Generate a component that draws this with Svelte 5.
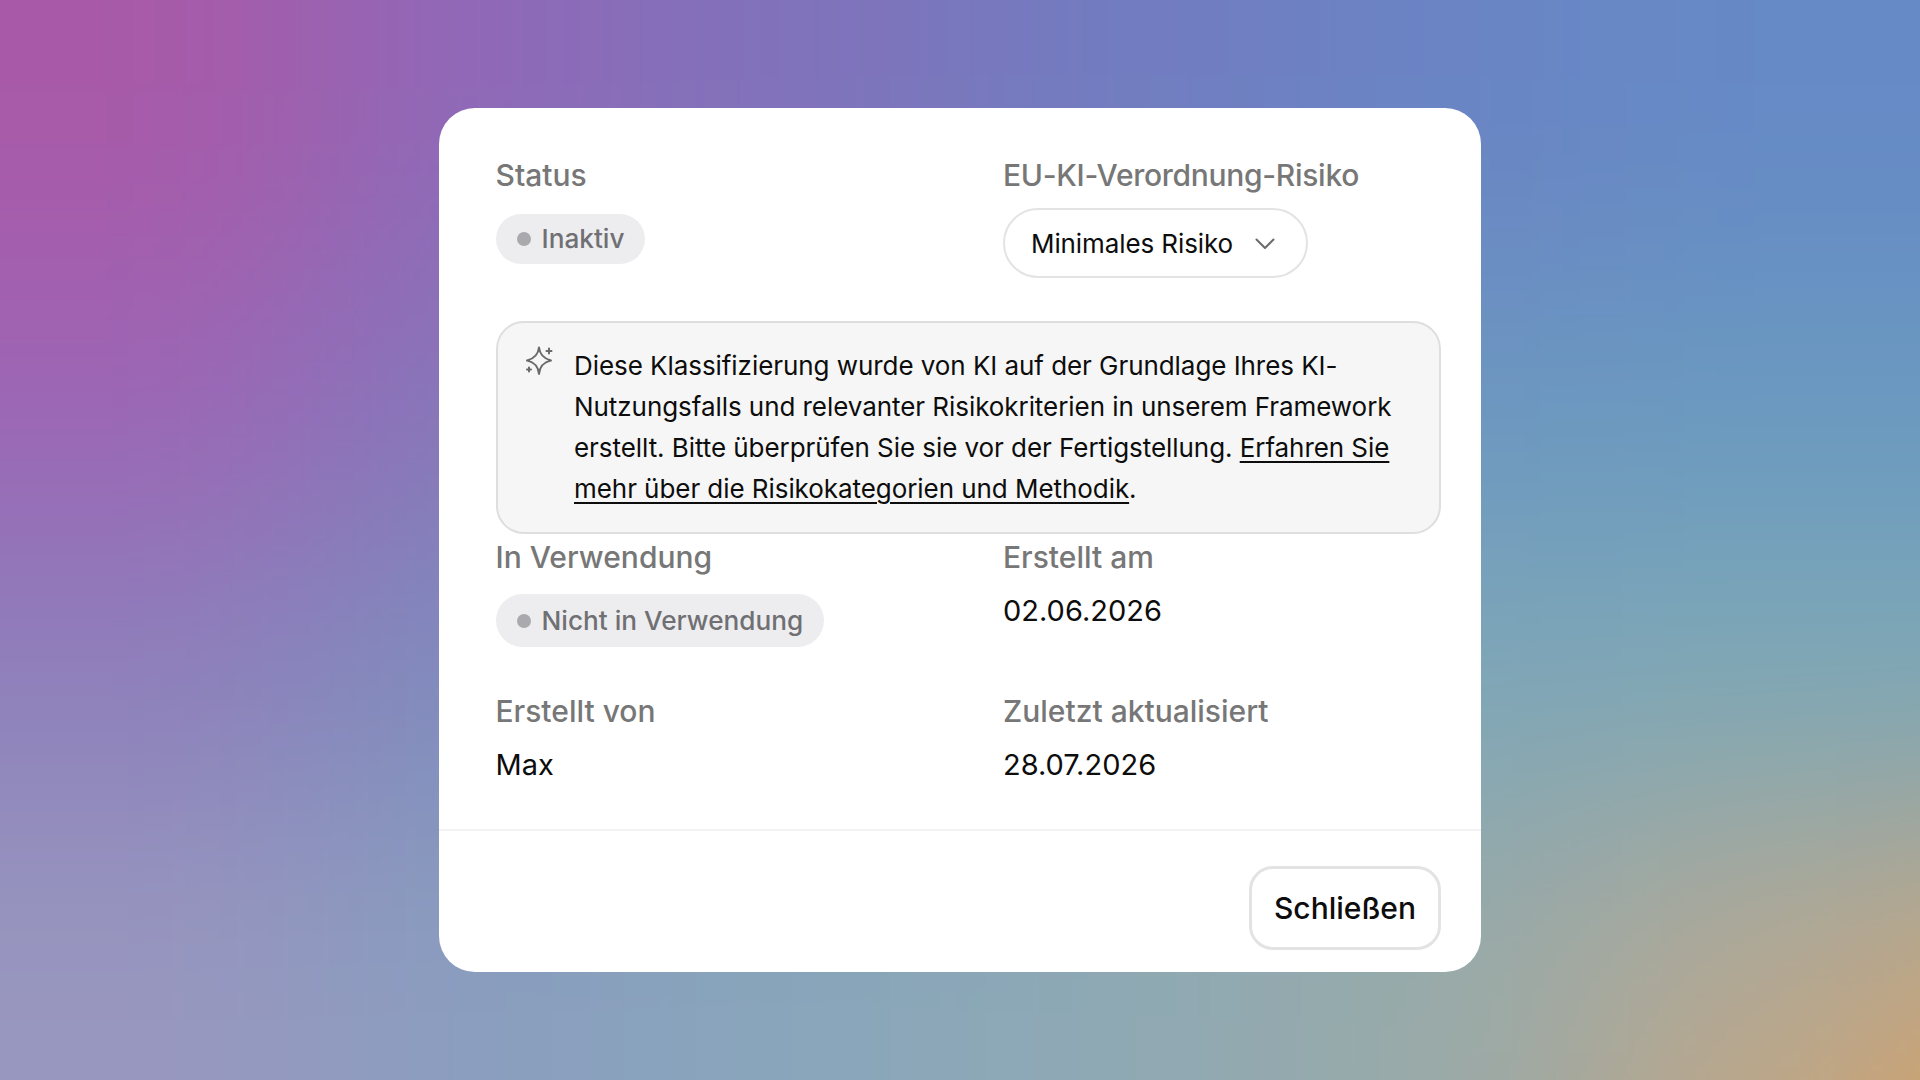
<script lang="ts">
  const rows = [
    { label: 'Erstellt von', value: 'Max' },
    { label: 'Zuletzt aktualisiert', value: '28.07.2026' }
  ]

  // backdrop colours, sampled on a coarse grid and blurred together
  const palette = [
    ['#a85aa8', '#8f69b8', '#8072bb', '#727cc0', '#6a84c4', '#668ac6'],
    ['#9c66b6', '#8677ba', '#7c84bc', '#7390bf', '#6c97c0', '#6a99c0'],
    ['#8d80bb', '#7f8cbd', '#7b98bd', '#7ba2bb', '#7ea7b8', '#7ea8b6'],
    ['#9897bf', '#8a9ebf', '#89a6bb', '#8fa9b4', '#99aaa9', '#b2a896']
  ]

  // repeat the outer cells so the blur has no fade at the window edge
  const padded = [palette[0], ...palette, palette[3]].map((r) => [r[0], ...r, r[5]])
  padded[5][7] = '#e89a48'
  padded[5][6] = '#c4a680'
  padded[4][7] = '#c4a680'
  const mesh = padded.flat()
</script>

<div class="page">
  <div class="mesh">
    {#each mesh as colour}
      <i style="background: {colour}"></i>
    {/each}
  </div>

  <div class="dialog">
    <div class="content">
      <div class="grid top">
        <div class="field">
          <span class="label">Status</span>
          <span class="pill first"><i class="dot"></i>Inaktiv</span>
        </div>
        <div class="field">
          <span class="label tight">EU-KI-Verordnung-Risiko</span>
          <button class="select">
            Minimales Risiko
            <svg width="24" height="24" viewBox="0 0 24 24" fill="none" stroke="#6b6b6b" stroke-width="2" stroke-linecap="round" stroke-linejoin="round">
              <path d="M3.5 8.5l8.5 8.5 8.5-8.5" />
            </svg>
          </button>
        </div>
      </div>

      <div class="notice">
        <svg class="spark" width="32" height="32" viewBox="0 0 32 32" fill="none" stroke="#6a6a6a" stroke-width="2" stroke-linecap="round" stroke-linejoin="round">
          <path d="M15 2.5C15.8 9.5 19 13.5 27 15.5 19 17.5 15.8 21.5 15 29 14.2 21.5 11 17.5 3 15.5 11 13.5 14.2 9.5 15 2.5Z" />
          <path d="M25 3.5v5M22.5 6h5M5 22.5v4M3 24.5h4" />
        </svg>
        <p>
          Diese Klassifizierung wurde von KI auf der Grundlage Ihres KI-Nutzungsfalls und relevanter Risikokriterien in unserem Framework erstellt. Bitte überprüfen Sie sie vor der Fertigstellung. <a href="#methodik">Erfahren Sie mehr über die Risikokategorien und Methodik</a>.
        </p>
      </div>

      <div class="grid usage">
        <div class="field">
          <span class="label">In Verwendung</span>
          <span class="pill second"><i class="dot"></i>Nicht in Verwendung</span>
        </div>
        <div class="field">
          <span class="label">Erstellt am</span>
          <span class="value">02.06.2026</span>
        </div>
      </div>

      <div class="grid meta">
        {#each rows as row}
          <div class="field">
            <span class="label">{row.label}</span>
            <span class="value">{row.value}</span>
          </div>
        {/each}
      </div>
    </div>

    <div class="footer">
      <button class="close">Schließen</button>
    </div>
  </div>
</div>

<style>
  :global(body) {
    margin: 0;
  }

  .page {
    position: relative;
    height: 1080px;
    overflow: hidden;
    display: flex;
    align-items: center;
    justify-content: center;
    font-family: Inter, "Liberation Sans", sans-serif;
  }

  .mesh {
    position: absolute;
    top: -270px;
    left: -320px;
    width: 2560px;
    height: 1620px;
    display: grid;
    grid-template-columns: repeat(8, 1fr);
    grid-template-rows: repeat(6, 1fr);
    filter: blur(110px);
  }

  .dialog {
    position: relative;
    width: 1042px;
    height: 864px;
    background: #fff;
    border-radius: 36px;
    display: flex;
    flex-direction: column;
    overflow: hidden;
  }

  .content {
    padding: 53px 40px 46px 56.5px;
    border-bottom: 2px solid #f3f3f3;
    box-sizing: border-box;
  }

  .grid {
    display: grid;
    grid-template-columns: 507.5px 1fr;
  }

  .field {
    display: flex;
    flex-direction: column;
    align-items: flex-start;
  }

  .label {
    margin-top: -4px;
    font-size: 30px;
    line-height: 36px;
    font-weight: 500;
    color: #777;
  }

  .tight {
    letter-spacing: -0.3px;
  }

  .pill {
    display: inline-flex;
    align-items: center;
    gap: 11px;
    background: #ededef;
    border-radius: 27px;
    color: #707074;
    font-size: 26.2px;
    font-weight: 500;
    padding: 0 21px;
    box-sizing: border-box;
  }

  .first {
    height: 50px;
    margin-top: 21px;
    padding-bottom: 2px;
  }

  .second {
    height: 53px;
    margin-top: 19px;
  }

  .dot {
    width: 14px;
    height: 14px;
    border-radius: 50%;
    background: #a9a9ae;
  }

  .first .dot {
    margin-top: 2px;
  }

  .select {
    height: 70px;
    width: 305px;
    margin-top: 15px;
    padding: 0 0 0 26px;
    display: flex;
    align-items: center;
    gap: 20px;
    background: #fff;
    border: 2px solid #e3e3e3;
    border-radius: 35px;
    color: #0d0d0d;
    font: 400 26px Inter, sans-serif;
    letter-spacing: -0.1px;
    box-sizing: border-box;
  }

  .notice {
    margin-top: 43px;
    height: 213px;
    box-sizing: border-box;
    display: flex;
    gap: 18px;
    align-items: flex-start;
    padding: 22px 40px 0 26.5px;
    border: 2px solid #dedede;
    border-radius: 28px;
    background: #f6f6f6;
  }

  .spark {
    flex: none;
  }

  .notice p {
    margin: 0;
    font-size: 26px;
    line-height: 41px;
    letter-spacing: -0.06px;
    color: #0d0d0d;
  }

  .notice a {
    color: inherit;
    text-decoration: underline;
    text-underline-offset: 4px;
  }

  .usage {
    margin-top: 9px;
  }

  .meta {
    margin-top: 50px;
  }

  .value {
    margin-top: 18px;
    font-size: 29px;
    line-height: 36px;
    color: #0d0d0d;
  }

  .footer {
    flex: 1;
    display: flex;
    justify-content: flex-end;
    align-items: flex-start;
    padding: 35px 40px 0 0;
  }

  .close {
    width: 192px;
    height: 84px;
    background: #fff;
    border: 3px solid #e3e3e3;
    border-radius: 24px;
    color: #0d0d0d;
    font: 500 30px Inter, sans-serif;
  }
</style>
